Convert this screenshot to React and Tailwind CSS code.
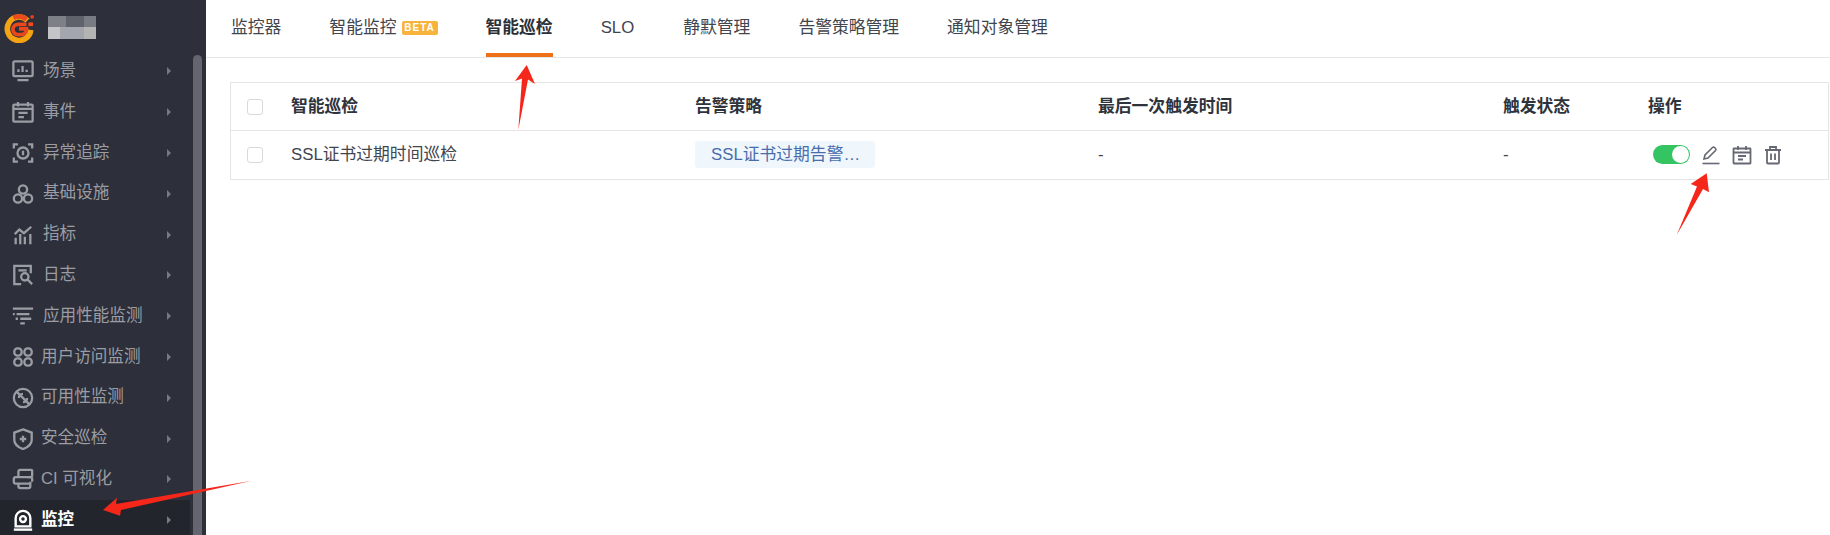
import React from "react";

const S = { width: 24, height: 24, viewBox: "0 0 24 24", fill: "none", stroke: "currentColor", strokeWidth: 2.5 };

const icons = {
  screen: <svg {...S}><rect x="1.500" y="1.500" width="21" height="16" rx="1.500"/><path d="M7 13V10M11.500 13V6.500M16 13V10.500M6 22h12" /></svg>,
  event: <svg {...S}><rect x="1.500" y="4" width="21" height="18.500" rx="1"/><path d="M6.500 1V6M17.500 1V6M1.500 8.500h21M7 13h10M7 17.500h6" /></svg>,
  trace: <svg {...S}><path d="M2 7V2.500h4.500M17.500 2.500H22V7M22 17v4.500h-4.500M6.500 21.500H2V17"/><circle cx="12" cy="12" r="6"/><path d="M12 9.500v5" /></svg>,
  infra: <svg {...S}><circle cx="12" cy="7" r="4.500"/><circle cx="6.500" cy="17" r="4.500"/><circle cx="17.500" cy="17" r="4.500"/></svg>,
  metric: <svg {...S}><path d="M3 11l5-5 5 4 8-7M4 22v-7M9 22V11M14 22v-8M20 22V11" /></svg>,
  log: <svg {...S}><path d="M10 22H2.500V2h18v8"/><path d="M7 7h9"/><circle cx="14" cy="14" r="4"/><path d="M17 17l5 5" /></svg>,
  apm: <svg {...S}><path d="M1 4h22M5 10h14M1 10h2M9 15h12M4 15h2.500M9 20h5" /></svg>,
  rum: <svg {...S}><rect x="2.500" y="2.500" width="8" height="8" rx="3.500"/><rect x="13.500" y="2.500" width="8" height="8" rx="3.500"/><rect x="2.500" y="13.500" width="8" height="8" rx="3.500"/><rect x="13.500" y="13.500" width="8" height="8" rx="3.500"/></svg>,
  avail: <svg {...S}><circle cx="12" cy="12" r="10"/><path d="M5 5l14 14"/><path d="M7.500 12a4.500 4.500 0 0 1 4.500-4.500M12 16.500a4.500 4.500 0 0 0 4.500-4.500" /></svg>,
  shield: <svg {...S}><path d="M12 1.500l9.500 3.500v8c0 5-4.500 8-9.500 10-5-2-9.500-5-9.500-10V5z"/><path d="M12 8.500v7M8.500 12h7" /></svg>,
  ci: <svg {...S}><path d="M7 9V4a2 2 0 0 1 2-2h12a1 1 0 0 1 1 1v5a2 2 0 0 1-2 2H4a2 2 0 0 0-2 2v3a2 2 0 0 0 2 2h16"/><path d="M17 10h3a2 2 0 0 1 2 2v3M7 17v3a2 2 0 0 0 2 2h9a2 2 0 0 0 2-2v-5" /></svg>,
  monitor: <svg width="24" height="24" viewBox="0 0 24 24" fill="none" stroke="currentColor" strokeWidth="2.600"><path d="M4 19V10a8 8 0 0 1 16 0v9z"/><circle cx="12" cy="11" r="3.200"/><path d="M2 22.500h20" /></svg>,
};

const menu = [
  { label: "场景", key: "screen", ml: "ml-[9px]" },
  { label: "事件", key: "event", ml: "ml-[9px]" },
  { label: "异常追踪", key: "trace", ml: "ml-[9px]" },
  { label: "基础设施", key: "infra", ml: "ml-[9px]" },
  { label: "指标", key: "metric", ml: "ml-[9px]" },
  { label: "日志", key: "log", ml: "ml-[9px]" },
  { label: "应用性能监测", key: "apm", ml: "ml-[9px]" },
  { label: "用户访问监测", key: "rum", ml: "ml-[7px]" },
  { label: "可用性监测", key: "avail", ml: "ml-[7px]" },
  { label: "安全巡检", key: "shield", ml: "ml-[7px]" },
  { label: "CI 可视化", key: "ci", ml: "ml-[7px]" },
  { label: "监控", key: "monitor", ml: "ml-[7px]" },
];

function Logo() {
  return (
    <svg className="shrink-0" width="30" height="30" viewBox="0 0 32 32" fill="none">
      <path d="M25 8A12.500 12.500 0 1 0 28.500 18" stroke="#f6a313" strokeWidth="6"/>
      <path d="M10 5a13 13 0 0 1 14 2" stroke="#ea4a1c" strokeWidth="5"/>
      <path d="M24 12h-9a5.500 5.500 0 0 0 0 11h3a6 6 0 0 0 6-6h-8" stroke="#e8481c" strokeWidth="4"/>
      <path d="M26 12h5" stroke="#ee4a1d" strokeWidth="4"/>
      <circle cx="30" cy="4" r="2" fill="#e8401f"/>
    </svg>
  );
}

function BlurredName() {
  return (
    <div className="ml-[14px] w-[48px] h-[23px] shrink-0 flex flex-col">
      <div className="flex h-[11px]">
        <div className="w-[18px] bg-[#7d8087]" />
        <div className="w-[18px] bg-[#5f626b]" />
        <div className="w-[12px] bg-[#787b82]" />
      </div>
      <div className="flex h-[12px]">
        <div className="w-[12px] bg-[#c3c4c7]" />
        <div className="w-[24px] bg-[#a3a6ad]" />
        <div className="w-[12px] bg-[#b4b4b5]" />
      </div>
    </div>
  );
}

function Sidebar() {
  return (
    <aside className="relative w-[206px] h-[535px] shrink-0 bg-[#2d2f3a] overflow-hidden">
      <div className="flex items-center h-[51px] pl-1 pt-[4px]">
        <Logo />
        <BlurredName />
      </div>
      <nav className="flex flex-col">
        {menu.map((m, i) => {
          const active = i === menu.length - 1;
          return (
            <div key={m.label} className={`flex items-center h-[40.800px] shrink-0 w-[190px] pl-[12px] ${active ? "bg-[#23252c] text-white font-bold" : "text-[#9b9da4]"}`}>
              <span className="w-[22px] h-[22px] flex items-center justify-center [&>svg]:w-[22px] [&>svg]:h-[22px]">{icons[m.key]}</span>
              <span className={`${m.ml} text-[16.600px] leading-none whitespace-nowrap`}>{m.label}</span>
              <span className="ml-auto mr-[19px] w-0 h-0 border-y-[4px] border-y-transparent border-l-[4px] border-l-[#767981]" />
            </div>
          );
        })}
      </nav>
      <div className="absolute left-[193px] top-[55px] bottom-0 w-[9px] rounded-t-[5px] bg-[#63666e]" />
    </aside>
  );
}

const tabs = [
  { t: "监控器", gap: "mr-[48px]" },
  { t: "智能监控", gap: "mr-[48px]", beta: true },
  { t: "智能巡检", gap: "mr-[48px]", active: true },
  { t: "SLO", gap: "mr-[49px]" },
  { t: "静默管理", gap: "mr-[48px]" },
  { t: "告警策略管理", gap: "mr-[48px]" },
  { t: "通知对象管理", gap: "" },
];

function Tabs() {
  return (
    <div className="flex items-stretch h-[58px] pl-[25px] border-b border-[#e6e6e6]">
      {tabs.map((tab) => (
        <div key={tab.t} className={`relative flex items-center h-[57px] pb-[1px] text-[16.800px] whitespace-nowrap ${tab.gap} ${tab.active ? "font-bold text-[#2b2f38]" : "text-[#41454e]"}`}>
          {tab.t}
          {tab.beta && (
            <span className="ml-[5px] w-[36px] h-[14px] flex items-center justify-center rounded-[2px] bg-[#f7b33c] text-white text-[10px] font-bold tracking-[1px] leading-none">BETA</span>
          )}
          {tab.active && <span className="absolute left-0 right-0 bottom-0 h-[4px] bg-[#ee7019]" />}
        </div>
      ))}
    </div>
  );
}

const Check = () => <span className="block w-[16px] h-[16px] rounded-[3px] border border-[#d9d9d9] bg-white" />;

function Actions() {
  return (
    <div className="flex items-center text-[#666973]">
      <span className="relative block w-[37px] h-[19px] rounded-full bg-[#34c462]">
        <span className="absolute right-[1px] top-[1px] w-[17px] h-[17px] rounded-full bg-white" />
      </span>
      <svg className="ml-[11px]" width="20" height="20" viewBox="0 0 20 20" fill="none" stroke="currentColor" strokeWidth="1.600"><path d="M3 14l1-4 7.500-7.500a1.400 1.400 0 0 1 2 0l1 1a1.400 1.400 0 0 1 0 2L7 13z"/><path d="M1.500 18.500h17" /></svg>
      <svg className="ml-[11px]" width="20" height="20" viewBox="0 0 20 20" fill="none" stroke="currentColor" strokeWidth="1.800"><rect x="1.500" y="3.500" width="17" height="15" rx="0.500"/><path d="M6 1v4M14 1v4M1.500 7.500h17M6 11h8M6 14.500h5" /></svg>
      <svg className="ml-[11px]" width="20" height="20" viewBox="0 0 20 20" fill="none" stroke="currentColor" strokeWidth="1.800"><path d="M2 5h16M7 5V2h6v3M4 5v12.500a1 1 0 0 0 1 1h10a1 1 0 0 0 1-1V5M8 8.500v6.500M12 8.500v6.500" /></svg>
    </div>
  );
}

function Table() {
  const cols = "grid grid-cols-[60px_404px_403px_405px_145px_1fr] items-center";
  return (
    <div className="ml-[24px] mr-[1px] mt-[24px] border border-[#e5e5e5] text-[16.800px]">
      <div className={`${cols} h-[48px] pt-[1px] border-b border-[#e5e5e5] font-bold text-[#2f333c]`}>
        <div className="pl-[16px]"><Check /></div>
        <div>智能巡检</div>
        <div>告警策略</div>
        <div>最后一次触发时间</div>
        <div>触发状态</div>
        <div>操作</div>
      </div>
      <div className={`${cols} h-[48px] pb-[1px] text-[#41454e]`}>
        <div className="pl-[16px]"><Check /></div>
        <div>SSL证书过期时间巡检</div>
        <div><span className="flex items-center w-[180px] h-[27px] pl-[16px] rounded-[3px] bg-[#eff7fd] text-[#4a6cab]">SSL证书过期告警…</span></div>
        <div>-</div>
        <div>-</div>
        <div className="ml-[5px]"><Actions /></div>
      </div>
    </div>
  );
}

function Arrows() {
  return (
    <svg className="absolute inset-0 pointer-events-none" width="1830" height="535" viewBox="0 0 1830 535">
      <g fill="#f5261a">
        <polygon points="526.700,65 515,81 522,78.500 518.300,130 528,79.500 535,84" />
        <polygon points="1706.700,173.300 1690.700,184 1697,186.500 1676.700,235 1703,189 1709,192.300" />
        <polygon points="103,510 117,497.700 116,504 251.700,480.700 121,510 120,515.700" />
      </g>
    </svg>
  );
}

export default function App() {
  return (
    <div className="relative flex w-[1830px] h-[535px] overflow-hidden bg-white font-['Liberation_Sans','Noto_Sans_CJK_SC',sans-serif]">
      <Sidebar />
      <main className="flex-1 min-w-0">
        <Tabs />
        <Table />
      </main>
      <Arrows />
    </div>
  );
}
